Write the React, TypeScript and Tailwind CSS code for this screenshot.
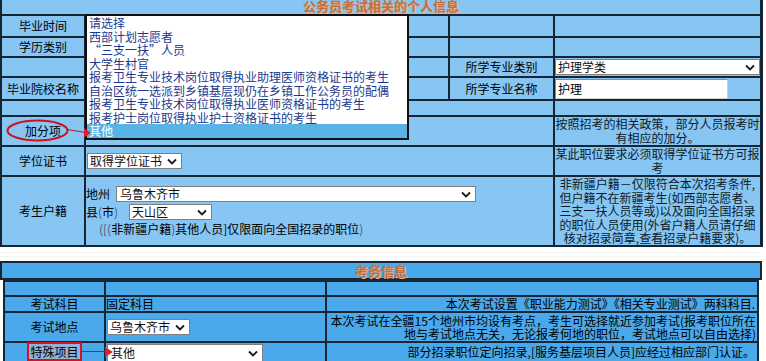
import React from "react";

const Chev = () => (
  <svg width="10" height="7" viewBox="0 0 10 7" className="shrink-0">
    <polyline points="1,1.5 5,5.5 9,1.5" fill="none" stroke="#1a1a1a" strokeWidth="1.8" />
  </svg>
);

function Sel({ text, cls }: { text: string; cls: string }) {
  return (
    <div className={"flex items-center bg-white border border-[#7f7f7f] pr-[4px] " + cls}>
      <span className="flex-1 pl-[2px] whitespace-nowrap leading-none text-[#111]">{text}</span>
      <Chev />
    </div>
  );
}

const C = ({ children, span2 }: { children?: React.ReactNode; span2?: boolean }) => (
  <div
    className={
      "bg-[#87c5f2] flex items-center justify-center whitespace-nowrap " + (span2 ? "col-span-2" : "")
    }
  >
    {children}
  </div>
);

const Note = ({ children, lh }: { children: React.ReactNode; lh?: string }) => (
  <div className="bg-[#87c5f2] flex items-center justify-center text-center text-[#0d1b2a]">
    <div className={lh === "s" ? "leading-[13.5px]" : "leading-[14px]"}>{children}</div>
  </div>
);

const B = ({ children, cls }: { children?: React.ReactNode; cls?: string }) => (
  <div className={"bg-[#49a9ea] flex whitespace-nowrap " + (cls || "")}>{children}</div>
);

export default function App() {
  const items = [
    "请选择",
    "西部计划志愿者",
    "“三支一扶”人员",
    "大学生村官",
    "报考卫生专业技术岗位取得执业助理医师资格证书的考生",
    "自治区统一选派到乡镇基层现仍在乡镇工作公务员的配偶",
    "报考卫生专业技术岗位取得执业医师资格证书的考生",
    "报考护士岗位取得执业护士资格证书的考生",
  ];
  return (
    <div className="relative w-[766px] h-[361px] overflow-hidden bg-white text-[12px] text-black font-['Noto_Sans_CJK_SC','Noto_Sans',sans-serif]">
      {/* top table */}
      <div className="w-[763px] grid grid-cols-[82px_362px_103px_205px] grid-rows-[14px_20px_18px_18px_21px_14px_28px_28px_68px] gap-[2px] px-[2px] pb-[2px] bg-[#172634]">
        <div className="col-span-4 bg-[#87c5f2] overflow-hidden flex justify-center">
          <span className="font-bold text-[13px] leading-[14px] -mt-[1px] text-[#c4703e] [text-shadow:1px_1px_0_#e6b08c]">
            公务员考试相关的个人信息
          </span>
        </div>
        {/* r1 */}
        <C>毕业时间</C>
        <C />
        <C />
        <C />
        {/* r2 */}
        <C>学历类别</C>
        <C />
        <C />
        <C />
        {/* r3 */}
        <C />
        <C />
        <C>所学专业类别</C>
        <div className="bg-[#87c5f2] flex items-center">
          <Sel text="护理学类" cls="w-full h-[16px]" />
        </div>
        {/* r4 */}
        <C>毕业院校名称</C>
        <C />
        <C>所学专业名称</C>
        <div className="bg-[#87c5f2] flex items-center">
          <div className="w-[173px] h-[20px] bg-white border border-[#8a8a8a] border-b-[#cfcfcf] border-r-[#cfcfcf] flex items-center pl-[2px] leading-none">
            护理
          </div>
        </div>
        {/* r5 */}
        <C />
        <C span2 />
        <C />
        {/* r6 */}
        <C>加分项</C>
        <C span2 />
        <Note>
          按照招考的相关政策，部分人员报考时
          <br />
          有相应的加分。
        </Note>
        {/* r7 */}
        <C>学位证书</C>
        <div className="col-span-2 bg-[#87c5f2] flex items-center">
          <Sel text="取得学位证书" cls="ml-[1px] w-[95px] h-[16px]" />
        </div>
        <Note>
          某此职位要求必须取得学位证书方可报
          <br />考
        </Note>
        {/* r8 */}
        <C>考生户籍</C>
        <div className="col-span-2 bg-[#87c5f2] flex flex-col justify-center gap-[2px] whitespace-nowrap">
          <div className="flex items-center h-[16px]">
            <span className="w-[30px] leading-none">地州</span>
            <Sel text="乌鲁木齐市" cls="w-[360px] h-[16px] [&>span]:pl-[3px]" />
          </div>
          <div className="flex items-center h-[16px]">
            <span className="w-[43px] leading-none">
              县<span className="text-[#4a5a72]">(</span>市<span className="text-[#4a5a72]">)</span>
            </span>
            <Sel text="天山区" cls="w-[83px] h-[16px]" />
          </div>
          <div className="pl-[13px] leading-[14px]">
            <span className="text-[#4a5a72]">([(</span>非新疆户籍<span className="text-[#4a5a72]">)</span>
            其他人员]仅限面向全国招录的职位<span className="text-[#4a5a72]">)</span>
          </div>
        </div>
        <Note lh="s">
          非新疆户籍－仅限符合本次招考条件,
          <br />
          但户籍不在新疆考生(如西部志愿者、
          <br />
          三支一扶人员等或)以及面向全国招录
          <br />
          的职位人员使用(外省户籍人员请仔细
          <br />
          核对招录简章,查看招录户籍要求)。
        </Note>
      </div>

      {/* white strip */}
      <div className="h-[14px] bg-white flex flex-col justify-center gap-[3px]">
        <div className="h-px w-[760px] bg-[#efefef]" />
        <div className="h-px w-[760px] bg-[#f2f2f2]" />
      </div>

      {/* bottom header */}
      <div className="w-[762px] h-[19px] border-2 border-[#172634] bg-[#49a9ea] flex items-center justify-center">
        <span className="font-bold text-[13px] leading-[14px] text-[#c4703e] [text-shadow:1px_1px_0_#e6b08c]">
          考务信息
        </span>
      </div>

      {/* bottom table */}
      <div className="ml-[3px] w-[756px] grid grid-cols-[99px_219px_430px] grid-rows-[13px_14px_28px_28px] gap-[2px] p-[2px] bg-[#172634]">
        <B />
        <B />
        <B />
        <B cls="items-center justify-center">考试科目</B>
        <B cls="items-center leading-none">固定科目</B>
        <B cls="items-center justify-end pr-[2px] leading-none">本次考试设置《职业能力测试》《相关专业测试》两科科目.</B>
        <B cls="items-center justify-center">考试地点</B>
        <B cls="items-center">
          <Sel text="乌鲁木齐市" cls="ml-[1px] w-[83px] h-[16px]" />
        </B>
        <B cls="items-center justify-end pr-[1px] text-right">
          <div className="leading-[13.5px]">
            本次考试在全疆15个地州市均设有考点，考生可选择就近参加考试(报考职位所在
            <br />
            地与考试地点无关，无论报考何地的职位，考试地点可以自由选择)
          </div>
        </B>
        <B cls="items-start justify-center pt-[0px]">
          <span className="border-2 border-[#d4141c] bg-[#90b1d8] px-[1px] leading-[15px] mt-[-1px]">特殊项目</span>
        </B>
        <B cls="items-start pt-[1px]">
          <Sel text="其他" cls="ml-[1px] w-[156px] h-[18px] [&>span]:pl-[3px]" />
        </B>
        <B cls="items-start justify-end pr-[2px] pt-[1px] leading-[15px]">部分招录职位定向招录,[服务基层项目人员]应经过相应部门认证。</B>
      </div>

      {/* open dropdown list */}
      <div className="absolute left-[85px] top-[14px] w-[324px] h-[126px] bg-white border-2 border-[#111] text-[#1a3a8c] whitespace-nowrap">
        {items.map((t) => (
          <div key={t} className="h-[13.55px] leading-[13.55px] pl-[2px]">
            {t}
          </div>
        ))}
        <div className="h-[13.55px] leading-[13.55px] pl-[2px] bg-[#5ab3e6] text-white">其他</div>
      </div>

      {/* red annotations */}
      <svg className="absolute left-0 top-0 pointer-events-none" width="766" height="361" viewBox="0 0 766 361">
        <ellipse cx="37.5" cy="130.5" rx="30" ry="10" fill="none" stroke="#d0101a" strokeWidth="2" />
        <line x1="67" y1="129.5" x2="86" y2="132.5" stroke="#b01828" strokeWidth="1" />
        <polygon points="84,128 91,133 84,137.5" fill="#e01e28" />
        <line x1="82" y1="351.5" x2="107" y2="351.5" stroke="#b01828" strokeWidth="1" />
        <polygon points="105,347 113,352 105,357" fill="#e01e28" />
      </svg>
    </div>
  );
}
